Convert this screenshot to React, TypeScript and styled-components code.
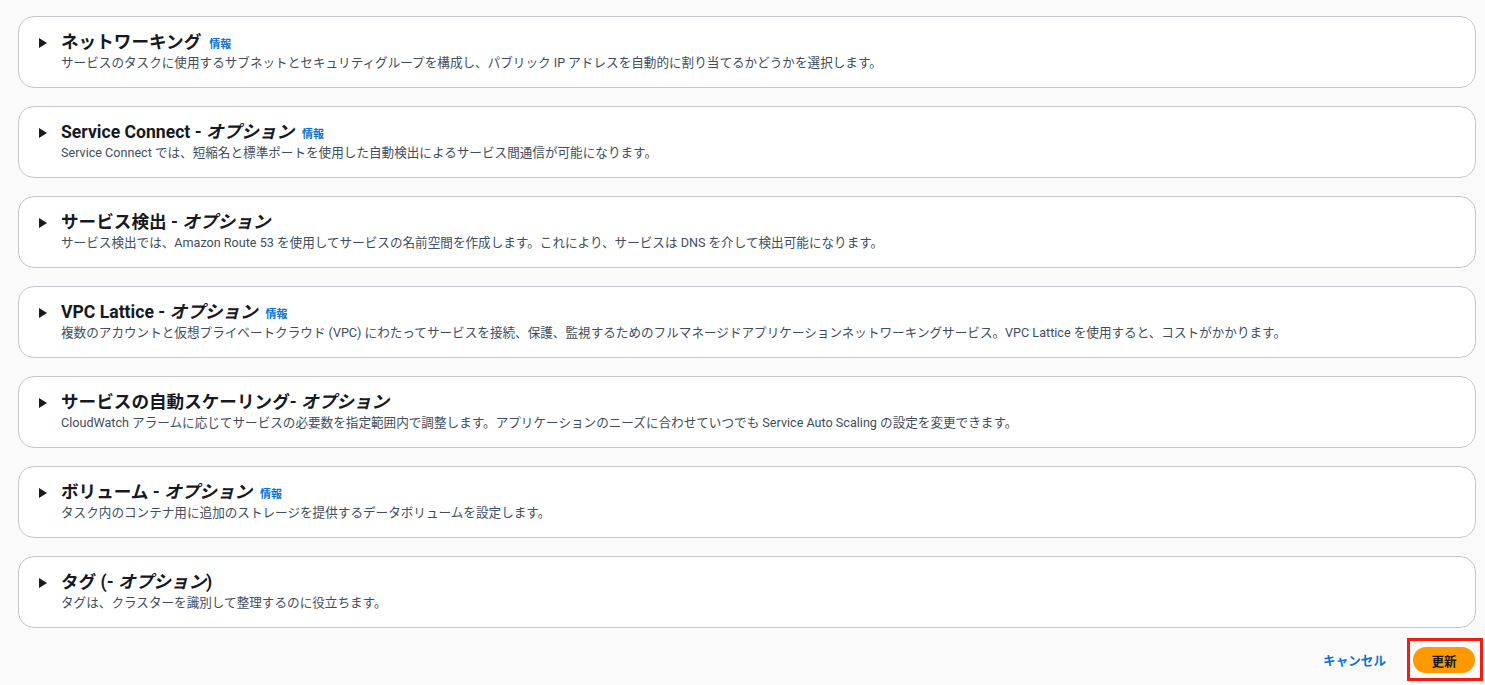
import styled, { createGlobalStyle } from 'styled-components'

const GlobalStyle = createGlobalStyle`
  body {
    margin: 0;
    background: #fafafa;
    font-family: Roboto, "Noto Sans CJK JP", sans-serif;
    color: #16191f;
  }
`

type Section = {
  title: string
  optional?: string
  closing?: string
  info?: boolean
  description: string
}

const sections: Section[] = [
  {
    title: 'ネットワーキング',
    info: true,
    description:
      'サービスのタスクに使用するサブネットとセキュリティグループを構成し、パブリック IP アドレスを自動的に割り当てるかどうかを選択します。',
  },
  {
    title: 'Service Connect - ',
    optional: 'オプション',
    info: true,
    description:
      'Service Connect では、短縮名と標準ポートを使用した自動検出によるサービス間通信が可能になります。',
  },
  {
    title: 'サービス検出 - ',
    optional: 'オプション',
    description:
      'サービス検出では、Amazon Route 53 を使用してサービスの名前空間を作成します。これにより、サービスは DNS を介して検出可能になります。',
  },
  {
    title: 'VPC Lattice - ',
    optional: 'オプション',
    info: true,
    description:
      '複数のアカウントと仮想プライベートクラウド (VPC) にわたってサービスを接続、保護、監視するためのフルマネージドアプリケーションネットワーキングサービス。VPC Lattice を使用すると、コストがかかります。',
  },
  {
    title: 'サービスの自動スケーリング- ',
    optional: 'オプション',
    description:
      'CloudWatch アラームに応じてサービスの必要数を指定範囲内で調整します。アプリケーションのニーズに合わせていつでも Service Auto Scaling の設定を変更できます。',
  },
  {
    title: 'ボリューム - ',
    optional: 'オプション',
    info: true,
    description: 'タスク内のコンテナ用に追加のストレージを提供するデータボリュームを設定します。',
  },
  {
    title: 'タグ (- ',
    optional: 'オプション',
    closing: ')',
    description: 'タグは、クラスターを識別して整理するのに役立ちます。',
  },
]

const Page = styled.div`
  padding: 16px 2px 4px 18px;
  display: flex;
  flex-direction: column;
  gap: 18px;
`

const Card = styled.div`
  background: #ffffff;
  border: 1px solid #c6c6cd;
  border-radius: 16px;
  margin-right: 7px;
  height: 72px;
  box-sizing: border-box;
  padding: 15px 20px 0 20px;
  display: grid;
  grid-template-columns: 22px 1fr;
  grid-template-rows: 20px 16px;
  row-gap: 3px;
`

const Caret = styled.span`
  width: 0;
  height: 0;
  border-top: 5px solid transparent;
  border-bottom: 5px solid transparent;
  border-left: 8px solid #16191f;
  align-self: center;
  margin-top: 1px;
`

const Title = styled.h2`
  margin: 0;
  font-size: 17.6px;
  line-height: 20px;
  font-weight: 700;
  display: flex;
  align-items: baseline;
  white-space: pre;
`

const Optional = styled.em`
  font-style: italic;
  font-weight: 700;
`

const InfoLink = styled.a`
  font-size: 11px;
  font-weight: 700;
  color: #0972d3;
  margin-left: 8px;
  text-decoration: none;
`

const Description = styled.p`
  grid-column: 2;
  margin: 0;
  font-size: 12.6px;
  line-height: 16px;
  color: #414d5c;
  white-space: nowrap;
`

const Footer = styled.div`
  display: flex;
  justify-content: flex-end;
  align-items: center;
  gap: 21px;
  margin-top: -8px;
`

const CancelLink = styled.a`
  font-size: 12.6px;
  font-weight: 700;
  color: #0972d3;
  text-decoration: none;
`

const Highlight = styled.div`
  border: 3px solid #f21d12;
  padding: 6px 5px 5px 3px;
`

const PrimaryButton = styled.button`
  background: #ff9900;
  border: none;
  border-radius: 14px;
  height: 26px;
  width: 62px;
  padding: 0;
  font-family: inherit;
  font-size: 12.6px;
  font-weight: 700;
  color: #16191f;
  cursor: pointer;
  display: block;
`

const App = () => (
  <>
    <GlobalStyle />
    <Page>
      {sections.map((s) => (
        <Card key={s.title}>
          <Caret />
          <Title>
            {s.title}
            {s.optional && <Optional>{s.optional}</Optional>}
            {s.closing}
            {s.info && <InfoLink href="#">情報</InfoLink>}
          </Title>
          <Description>{s.description}</Description>
        </Card>
      ))}
      <Footer>
        <CancelLink href="#">キャンセル</CancelLink>
        <Highlight>
          <PrimaryButton>更新</PrimaryButton>
        </Highlight>
      </Footer>
    </Page>
  </>
)

export default App
